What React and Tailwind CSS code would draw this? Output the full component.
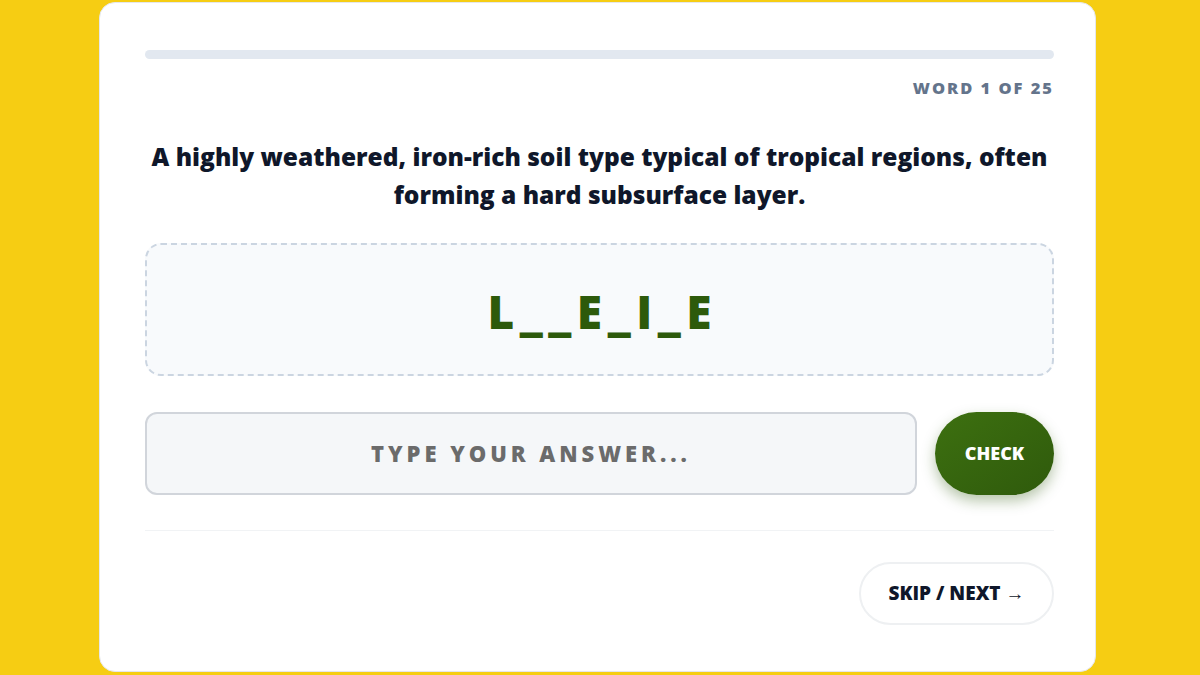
export default function App() {
  return (
    <div className="w-[1200px] h-[675px] bg-[#f6cd13] overflow-hidden" style={{ fontFamily: "'Open Sans', 'Noto Sans', sans-serif" }}>
      <div className="ml-[99px] mt-[2px] w-[997px] h-[670px] bg-white rounded-2xl border border-[#e5e7eb] pl-[45px] pr-[41px] pt-[47px]">
        <div className="h-[9px] w-full rounded-full bg-[#e2e8f0]"></div>
        <div className="mt-[18px] text-right text-[16.5px] font-extrabold tracking-[0.12em] text-[#64748b] leading-[22px]">
          WORD 1 OF 25
        </div>
        <h1 className="mt-[39px] text-center text-[24.5px] leading-[38px] font-extrabold text-[#0f172a]">
          A highly weathered, iron-rich soil type typical of tropical regions, often forming a hard subsurface layer.
        </h1>
        <div className="mt-[29px] h-[133px] rounded-2xl border-2 border-dashed border-[#cbd5e1] bg-[#f8fafc] flex items-center justify-center">
          <span className="text-[46px] font-extrabold text-[#2d5a0b] tracking-[0.12em] pl-[0.12em] mt-[4px]">L__E_I_E</span>
        </div>
        <div className="mt-[36px] flex items-center gap-[18px]">
          <div className="flex-1 h-[83px] rounded-xl border-2 border-[#d1d5db] bg-[#f5f7f9] flex items-center justify-center">
            <span className="text-[22px] font-extrabold tracking-[0.18em] text-[#6b6b6b]">
              TYPE YOUR ANSWER...
            </span>
          </div>
          <button className="w-[119px] h-[83px] rounded-full bg-gradient-to-br from-[#3d7010] to-[#2f5a0c] text-white text-[18px] font-extrabold shadow-[0_6px_14px_rgba(45,90,11,0.35)]">
            CHECK
          </button>
        </div>
        <div className="mt-[35px] h-px bg-[#f1f3f5]"></div>
        <div className="mt-[31px] flex justify-end">
          <button className="w-[195px] h-[63px] rounded-full border-2 border-[#eef0f2] bg-white text-[19px] font-extrabold text-[#0f172a]">
            SKIP / NEXT →
          </button>
        </div>
      </div>
    </div>
  );
}
